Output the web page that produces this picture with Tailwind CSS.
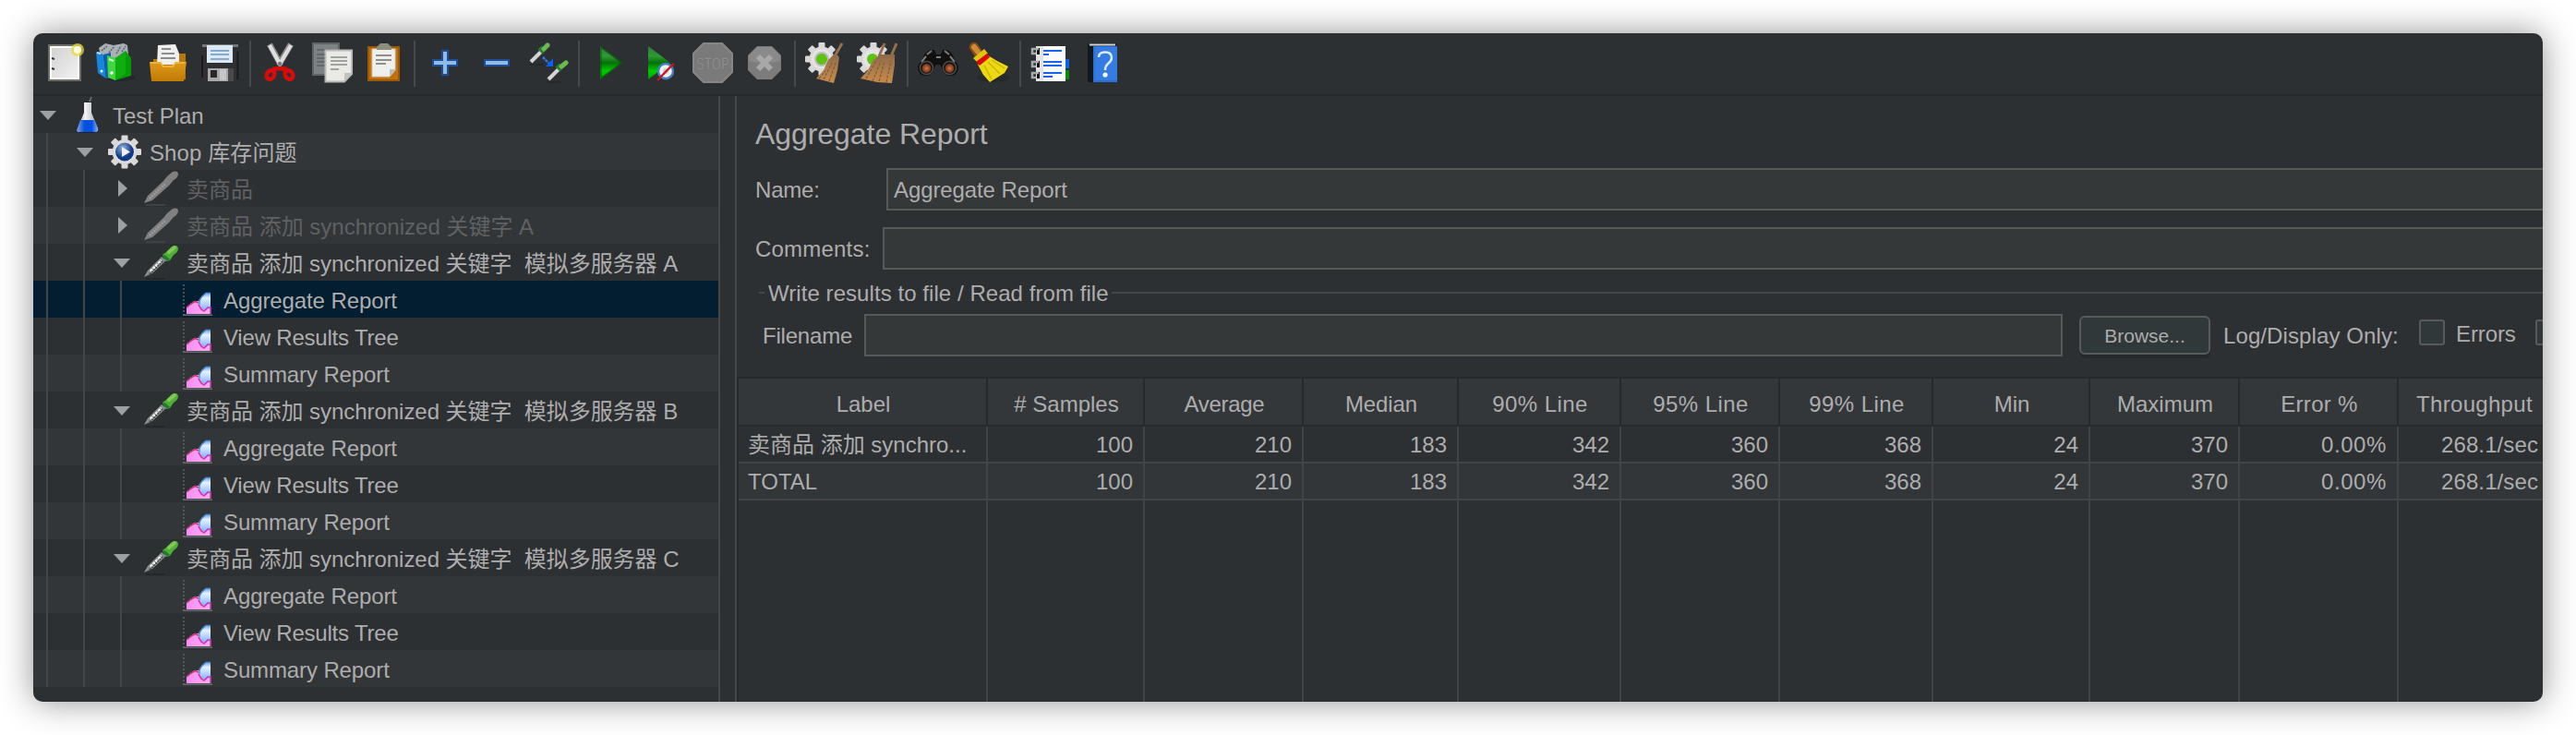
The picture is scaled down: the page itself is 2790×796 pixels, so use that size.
<!DOCTYPE html>
<html lang="zh">
<head>
<meta charset="utf-8">
<title>Aggregate Report</title>
<script src="https://cdn.jsdelivr.net/npm/@tailwindcss/browser@4"></script>
</head>
<body class="w-[2790px] h-[796px] overflow-hidden bg-white p-9 text-2xl text-[#adadad] font-['Liberation_Sans','Noto_Sans_CJK_SC',sans-serif]">

<svg class="absolute w-0 h-0">
  <defs>
    <linearGradient id="blueFlask" x1="0" x2="1"><stop offset="0" stop-color="#7fa4e8"/><stop offset=".35" stop-color="#0a4fd8"/><stop offset=".7" stop-color="#0050e8"/><stop offset="1" stop-color="#8ab0f0"/></linearGradient>
    <linearGradient id="glass" x1="0" x2="1"><stop offset="0" stop-color="#8f949c"/><stop offset=".4" stop-color="#f4f4f4"/><stop offset="1" stop-color="#a0a4aa"/></linearGradient>
    <linearGradient id="playG" x1="0" x2="0" y1="0" y2="1"><stop offset="0" stop-color="#2f7d36"/><stop offset=".3" stop-color="#2f9a36"/><stop offset=".5" stop-color="#067006"/><stop offset=".75" stop-color="#00cc00"/><stop offset="1" stop-color="#009a00"/></linearGradient>
    <linearGradient id="folder" x1="0" x2="0" y1="0" y2="1"><stop offset="0" stop-color="#e09a18"/><stop offset="1" stop-color="#c07a06"/></linearGradient>
    <linearGradient id="sky" x1="0" x2="0" y1="0" y2="1"><stop offset="0" stop-color="#6ba4ea"/><stop offset=".3" stop-color="#e6f2ff"/><stop offset="1" stop-color="#7db2f5"/></linearGradient>
    <linearGradient id="pink" x1="0" x2="1"><stop offset="0" stop-color="#f58cf5"/><stop offset="1" stop-color="#ffb4ea"/></linearGradient>
    <linearGradient id="page" x1="0" x2="1" y1="0" y2="1"><stop offset="0" stop-color="#cfcfcf"/><stop offset="1" stop-color="#f4f4f4"/></linearGradient>
    <linearGradient id="straw" x1="0" x2="0" y1="0" y2="1"><stop offset="0" stop-color="#8f6a48"/><stop offset=".6" stop-color="#b0804e"/><stop offset="1" stop-color="#c98a48"/></linearGradient>
    <radialGradient id="lens"><stop offset="0" stop-color="#d07a4a"/><stop offset="1" stop-color="#6d2a10"/></radialGradient>
    <radialGradient id="ball" cx=".4" cy=".3"><stop offset="0" stop-color="#9ab4e0"/><stop offset="1" stop-color="#123a86"/></radialGradient>
    <g id="gear">
      <g fill="#d9d9d9">
        <rect x="-3.500" y="-18" width="7" height="36" rx="1"/><rect x="-3.500" y="-18" width="7" height="36" rx="1" transform="rotate(45)"/>
        <rect x="-3.500" y="-18" width="7" height="36" rx="1" transform="rotate(90)"/><rect x="-3.500" y="-18" width="7" height="36" rx="1" transform="rotate(135)"/>
        <circle r="13.500"/>
      </g>
      <circle r="11" fill="#e4e4e4"/>
    </g>
    <symbol id="leaf" viewBox="0 0 55 40">
      <path d="M12 4V37" stroke="#5c5e60" stroke-width="1.6" stroke-dasharray="2 2"/><path d="M11 37.200H43" stroke="#6a6a6e" stroke-width="1.6"/>
      <path d="M15 36V29L24 22H30L41 28V36Z" fill="url(#pink)"/>
      <path d="M29 24L31 18L36 13H41V29L36 32L31 30Z" fill="url(#sky)"/>
      <path d="M29 26V21L32 17L36 13.500H41" fill="none" stroke="#4f8fe0" stroke-width="1.400"/>
      <path d="M15 29L20 25L24 22.500L28 24" fill="none" stroke="#c23a78" stroke-width="1.600"/>
      <path d="M28 26L31 31L34 33L38 29L41 29V36" fill="none" stroke="#d62fb8" stroke-width="1.600"/>
    </symbol>
    <symbol id="dropper" viewBox="0 0 55 40">
      <path d="M11 38H32" stroke="#24282a" stroke-width="2"/>
      <path d="M9 36L13 29L28 14L33 18L18 32Z" fill="#8b8e8e"/><path d="M16 30L28 18" stroke="#f2f2f2" stroke-width="3" stroke-dasharray="3 1"/><path d="M15 33L30 18" stroke="#3c4042" stroke-width="1.5" stroke-dasharray="2 1"/>
      <path d="M29 12L34 8L39 3Q45 0 46 5Q46 9 41 12L37 18L33 19Z" fill="#4fae35"/><path d="M36 9L42 4" stroke="#7bcb58" stroke-width="4" stroke-linecap="round"/><path d="M30 13L36 18" stroke="#1f7f2a" stroke-width="3"/>
    </symbol>
    <symbol id="dropperOff" viewBox="0 0 55 40">
      <path d="M11 38H32" stroke="#45494b" stroke-width="1.4"/>
      <path d="M9 36L13 28L30 12L34 7L40 2Q46 0 46 5Q45 9 41 11L36 17L18 33Z" fill="#808080"/><path d="M15 31L32 15" stroke="#9b9b9b" stroke-width="2.5" stroke-dasharray="2 1"/>
    </symbol>
    <symbol id="down" viewBox="0 0 30 40"><path d="M6 16H24L15 26Z" fill="#9da0a2"/></symbol>
    <symbol id="right" viewBox="0 0 30 40"><path d="M11 11V29L21 20Z" fill="#9da0a2"/></symbol>
  </defs>
</svg>

<main class="flex flex-col w-[2718px] h-[724px] rounded-[10px] overflow-hidden bg-[#2d3033] shadow-[0_0_36px_rgba(0,0,0,0.43)]">

  <!-- Toolbar -->
  <header class="flex items-start h-[68px] shrink-0 border-b-2 border-[#26292b] pl-3 [&_svg]:w-11 [&_svg]:h-11 [&_svg]:shrink-0 [&>div]:flex [&>div]:gap-3 [&>div]:mt-2.5 [&>i]:w-0.5 [&>i]:h-[50px] [&>i]:mt-2 [&>i]:mx-2.5 [&>i]:bg-[#47494a]">
    <div>
      <svg viewBox="0 0 44 44"><rect x="5" y="3" width="34" height="38" fill="url(#page)" stroke="#6d6e66" stroke-width="2"/><rect x="7" y="5" width="30" height="34" fill="none" stroke="#fff" stroke-width="2"/><path d="M8 17l3 1M8 28l3 1" stroke="#333" stroke-width="2"/><circle cx="36" cy="8" r="7" fill="#e5dc3a" opacity=".75"/><circle cx="36" cy="8" r="4" fill="#fffbe0"/></svg>
      <svg viewBox="0 0 44 44"><ellipse cx="26" cy="38" rx="17" ry="4" fill="#24282a"/><path d="M3 6L10 1L19 3L30 1L34 3L35 14L20 17L5 14Z" fill="#a9b1b5"/><path d="M6 9l6-5 M14 11l6-7 M22 12l5-8 M28 10l4-6" stroke="#5d686e" stroke-width="1.6" stroke-dasharray="2 1"/><path d="M0 10L8 13L11 39L2 33Z" fill="#1687dc"/><path d="M8 13L16 11V38L11 39Z" fill="#0a5fae"/><path d="M1 11L5 12" stroke="#bfe3ff" stroke-width="2"/><path d="M12 14L21 17V41L13 38Z" fill="#3fd63f"/><path d="M21 17L32 9L38 17V36L21 41Z" fill="#079a07"/><path d="M21 17L32 10V34L21 41Z" fill="#0fae0f"/><circle cx="6" cy="31" r="1.5" fill="#fff"/><circle cx="17" cy="33" r="1.8" fill="#fff"/><path d="M14 18L19 20" stroke="#d6ffd6" stroke-width="2"/></svg>
      <svg viewBox="0 0 44 44"><path d="M30 12H41V40H6V18H30Z" fill="#b9780a"/><path d="M11 3L30 2L34 12V24H10Z" fill="#efefef"/><path d="M15 7H25M15 12H29M14 17H30" stroke="#8c8c8c" stroke-width="2"/><path d="M2 21H14L17 25H27L30 21H42L39 42H4Z" fill="url(#folder)"/><path d="M3 22H14L17 26H27L30 22H40" fill="none" stroke="#f3bd4c" stroke-width="1.5"/></svg>
      <svg viewBox="0 0 44 44"><rect x="3" y="2" width="39" height="40" rx="2" fill="#303033"/><rect x="3" y="2" width="39" height="3" fill="#77777a"/><path d="M3 14V38M41.500 10V40" stroke="#1a1a1c" stroke-width="2"/><rect x="8" y="3" width="28" height="19" fill="#dbe9f5"/><path d="M12 9H32M12 13H32M12 18H32" stroke="#86abcf" stroke-width="2"/><rect x="9" y="28" width="22" height="14" fill="#a8a8a8"/><rect x="12" y="30" width="7" height="8" fill="#28282a"/><rect x="22" y="29" width="7" height="12" fill="#c6c6c6"/><rect x="31" y="28" width="6" height="14" fill="#4a4a4c"/></svg>
    </div>
    <i></i>
    <div>
      <svg viewBox="0 0 44 44"><path d="M10 2L22 24M33 2L20 24" stroke="#8c8c8c" stroke-width="6.500"/><path d="M10 3L22 25M33 3L20 25" stroke="#dedede" stroke-width="4.200"/><circle cx="21" cy="23" r="2.200" fill="#777"/><g fill="none" stroke="#dd0a0a" stroke-width="4.400"><ellipse cx="11" cy="35" rx="4" ry="5" transform="rotate(35 11 35)"/><ellipse cx="31" cy="35" rx="4" ry="5" transform="rotate(-35 31 35)"/><path d="M13 29L21 28L29 29"/></g></svg>
      <svg viewBox="0 0 44 44"><rect x="1" y="1" width="28" height="34" fill="#7d8284" stroke="#5e6466" stroke-width="2"/><path d="M5 8H20M5 13H14M5 17H14M5 21H14M5 25H14" stroke="#63686a" stroke-width="2"/><path d="M14.500 8.500H43V34L35 42.500H14.500Z" fill="#e9e9e6" stroke="#b9b9b5" stroke-width="2"/><path d="M43 33H35V42Z" fill="#c2c2be"/><path d="M20 16H38M20 20H38M20 24H38M20 29H29" stroke="#a2a2a0" stroke-width="2"/></svg>
      <svg viewBox="0 0 44 44"><rect x="5" y="5" width="33" height="36" fill="#c1700a" stroke="#9b5805" stroke-width="2"/><path d="M9 7H34V30L28 37H9Z" fill="#efefec" stroke="#ccc" stroke-width="1"/><path d="M35 29H28V37Z" fill="#bdbdb8"/><path d="M13 14H30M13 19H30M13 23H24" stroke="#8f8f8c" stroke-width="2"/><path d="M14 8V5L18 1H26L30 5V8Z" fill="#8d8e7c"/></svg>
    </div>
    <i></i>
    <div>
      <svg viewBox="0 0 44 44"><path d="M19 9H25V19H35V25H25V35H19V25H9V19H19Z" fill="#8fbbe6" stroke="#1d4f97" stroke-width="2"/></svg>
      <svg viewBox="0 0 44 44"><path d="M9 19H35V25H9Z" fill="#8fbbe6" stroke="#1d4f97" stroke-width="2"/></svg>
      <svg viewBox="0 0 44 44"><path d="M2 24H17M21 43H36" stroke="#232628" stroke-width="1.500"/><path d="M3 21L14 10" stroke="#d4d4d4" stroke-width="4"/><path d="M13 10L17 6" stroke="#257a30" stroke-width="7"/><path d="M17 7L21 3" stroke="#6cba4e" stroke-width="5" stroke-linecap="round"/><path d="M22 40L33 29" stroke="#d4d4d4" stroke-width="4"/><path d="M32 29L36 25" stroke="#257a30" stroke-width="7"/><path d="M36 26L41 22" stroke="#6cba4e" stroke-width="5" stroke-linecap="round"/><path d="M16 16L23 23" stroke="#2f78ee" stroke-width="2.500" stroke-dasharray="3 1"/><path d="M27 17V26H19Z" fill="#0d5ff0"/></svg>
    </div>
    <i></i>
    <div>
      <svg viewBox="0 0 44 44"><path d="M12 4L36 22L12 40Z" fill="url(#playG)"/><path d="M13 5.500L35 22L13 38.500Z" fill="none" stroke="#064f06" stroke-width="1.300" opacity=".7"/></svg>
      <svg viewBox="0 0 44 44"><path d="M8 4L32 22L8 40Z" fill="url(#playG)"/><circle cx="27" cy="31" r="8" fill="#f2f2f2" stroke="#3f7fc4" stroke-width="2.400"/><circle cx="27" cy="31" r="3" fill="#c9c9c9"/><path d="M35.500 23L18 41" stroke="#d01020" stroke-width="2.400"/></svg>
      <svg viewBox="0 0 44 44"><path d="M12 0H32L44 12V32L32 44H12L0 32V12Z" fill="#7a7a7a"/><path d="M12 1H32L43 12V32L32 43H12L1 32V12Z" fill="none" stroke="#868686" stroke-width="2"/><text transform="translate(22 29.500) scale(.63 1)" text-anchor="middle" font-size="21" font-weight="bold" fill="#8c8c8c" stroke="#6c6c6c" stroke-width=".6">STOP</text></svg>
      <svg viewBox="0 0 44 44"><path d="M14 4H30L40 14V30L30 40H14L4 30V14Z" fill="#7c7c7c"/><path d="M14 5H30L39 14V20Q22 24 5 20V14Z" fill="#8a8a8a"/><path d="M15 15L29 29M29 15L15 29" stroke="#a8a8a8" stroke-width="6"/></svg>
    </div>
    <i></i>
    <div>
      <svg viewBox="0 0 44 44"><use href="#gear" x="18" y="18"/><circle cx="18" cy="18" r="8" fill="#bdbdbd"/><circle cx="18" cy="18" r="6" fill="#5ec212"/><path d="M40 1L32 15" stroke="#94714c" stroke-width="3"/><path d="M25 19L31 13L37 16L35 30L31 44L12 39L20 30Z" fill="url(#straw)"/><path d="M20 40L29 22M26 42L33 22M15 39L22 31" stroke="#835a34" stroke-width="1.200" stroke-dasharray="3 1.500"/></svg>
      <svg viewBox="0 0 44 44"><use href="#gear" x="18" y="18"/><circle cx="17" cy="18" r="6" fill="#5ec212"/><path d="M30 1L24 15M43 1L37 15" stroke="#94714c" stroke-width="3"/><path d="M17 20L25 13H41V24L38 44L22 43L4 39L12 30Z" fill="url(#straw)"/><path d="M10 39L21 20M17 42L26 20M24 42L30 20M32 43L37 20" stroke="#835a34" stroke-width="1.200" stroke-dasharray="3 1.500"/></svg>
    </div>
    <i></i>
    <div>
      <svg viewBox="0 0 44 44"><path d="M0 26L8 12L13 8H18L20 13H25L27 8H32L37 12L44 26Q44 36 35 36Q28 36 26 27L24 24H20L18 27Q16 36 9 36Q0 36 0 26Z" fill="#111"/><path d="M10 13L15 9M29 9L34 13M4 21L9 15M35 15L40 21M20 16H25" stroke="#7d7d7d" stroke-width="2"/><circle cx="9.500" cy="27.500" r="7" fill="none" stroke="#4c4c4c" stroke-width="1.500"/><circle cx="34.500" cy="27.500" r="7" fill="none" stroke="#4c4c4c" stroke-width="1.500"/><circle cx="9.500" cy="28" r="5" fill="url(#lens)"/><circle cx="34.500" cy="28" r="5" fill="url(#lens)"/></svg>
      <svg viewBox="0 0 44 44"><ellipse cx="26" cy="38" rx="18" ry="5" fill="#26292a"/><path d="M5 5L9 11" stroke="#8a4d0c" stroke-width="10" stroke-linecap="round"/><path d="M5 5L9 10" stroke="#cf8a3c" stroke-width="6" stroke-linecap="round"/><path d="M4 17L16 7L20 12L8 21Z" fill="#ddc60e"/><path d="M9 24L20 14L30 20L42 26L38 33L22 43L15 35Z" fill="#ecd912"/><path d="M16 25L24 40M20 21L33 34M24 19L38 28" stroke="#c9b40c" stroke-width="1.400"/><path d="M7 21L19 12L22 16L11 25Z" fill="#dd0808"/></svg>
    </div>
    <i></i>
    <div>
      <svg viewBox="0 0 44 44"><rect x="37" y="18" width="5" height="10" fill="#0b62ea"/><rect x="37" y="30" width="5" height="10" fill="#0a8a0a"/><rect x="6" y="4" width="32" height="38" fill="#fafafa"/><rect x="6" y="4" width="8" height="38" fill="#e2e2e2"/><path d="M14 9H34M14 21H34M14 33H34" stroke="#1763ee" stroke-width="2"/><path d="M14 13H20M14 25H34M14 37H24" stroke="#1763ee" stroke-width="2"/><g fill="#111"><rect x="7" y="6" width="3" height="7"/><rect x="7" y="20" width="3" height="7"/><rect x="7" y="32" width="3" height="7"/></g><g fill="none" stroke="#a9a9a9" stroke-width="2.500"><path d="M9 7H2V12H6M9 21H2V26H6M9 33H2V38H6"/></g></svg>
      <svg viewBox="0 0 44 44"><path d="M8 1H37L38 43H6V4Z" fill="#15171a"/><path d="M12 4H38V43H12Z" fill="#2a6fd6"/><path d="M14 5H38V41H14Z" fill="#347be2"/><path d="M8 2.500H36" stroke="#d5d5d5" stroke-width="2"/><path d="M18 16Q18 10.500 25 10.500Q32 10.500 32 16.500Q32 20 28 23Q25 25.500 25 30" fill="none" stroke="#dcebff" stroke-width="2.400"/><circle cx="25" cy="35" r="2.600" fill="#fff"/></svg>
    </div>
  </header>

  <div class="flex flex-1 min-h-0">
    <!-- Test plan tree -->
    <nav class="w-[744px] shrink-0 border-r-2 border-[#464646] leading-[43px] [&_span]:whitespace-pre [&>div]:flex [&>div]:h-10 [&>div:nth-child(even)]:bg-[#323639] [&_i]:h-10 [&_i]:shrink-0 [&_i]:border-l-2 [&_i]:border-[#434547] [&_svg]:h-10 [&_svg]:shrink-0">
      <div class="pl-px"><svg class="w-[30px]"><use href="#down"/></svg><svg class="w-[55px]" viewBox="0 0 55 40"><ellipse cx="28" cy="38" rx="12" ry="2" fill="#202326"/><path d="M30 6L32 1" stroke="#6a6a6a" stroke-width="2"/><path d="M24 7H32V18L39 35Q40 39 36 39H19Q15 39 17 35L24 18Z" fill="url(#glass)"/><path d="M20 26H35L39 35Q40 39 36 39H19Q15 39 17 35Z" fill="url(#blueFlask)"/></svg><span>Test Plan</span></div>
      <div class="pl-3.5"><i class="w-[27px]"></i><svg class="w-[30px]"><use href="#down"/></svg><svg class="w-[55px]" viewBox="0 0 55 40"><use href="#gear" x="28" y="20.500"/><circle cx="28" cy="20.500" r="10" fill="url(#ball)"/><path d="M25 15L34 20.500L25 26Z" fill="#eef3fb"/></svg><span class="tracking-[0.1px]">Shop 库存问题</span></div>
      <div class="pl-3.5 text-[#5f6163]"><i class="w-10"></i><i class="w-[27px]"></i><svg class="w-[30px]"><use href="#right"/></svg><svg class="w-[55px]"><use href="#dropperOff"/></svg><span>卖商品</span></div>
      <div class="pl-3.5 text-[#5f6163]"><i class="w-10"></i><i class="w-[27px]"></i><svg class="w-[30px]"><use href="#right"/></svg><svg class="w-[55px]"><use href="#dropperOff"/></svg><span>卖商品 添加 synchronized 关键字 A</span></div>
      <div class="pl-3.5"><i class="w-10"></i><i class="w-[27px]"></i><svg class="w-[30px]"><use href="#down"/></svg><svg class="w-[55px]"><use href="#dropper"/></svg><span class="-tracking-[0.04px]">卖商品 添加 synchronized 关键字  模拟多服务器 A</span></div>
      <div class="pl-3.5 bg-[#041e31]!"><i class="w-10"></i><i class="w-10"></i><i class="w-[57px]"></i><svg class="w-[55px]"><use href="#leaf"/></svg><span class="-tracking-[0.1px]">Aggregate Report</span></div>
      <div class="pl-3.5"><i class="w-10"></i><i class="w-10"></i><i class="w-[57px]"></i><svg class="w-[55px]"><use href="#leaf"/></svg><span class="-tracking-[0.2px]">View Results Tree</span></div>
      <div class="pl-3.5"><i class="w-10"></i><i class="w-10"></i><i class="w-[57px]"></i><svg class="w-[55px]"><use href="#leaf"/></svg><span class="-tracking-[0.12px]">Summary Report</span></div>
      <div class="pl-3.5"><i class="w-10"></i><i class="w-[27px]"></i><svg class="w-[30px]"><use href="#down"/></svg><svg class="w-[55px]"><use href="#dropper"/></svg><span class="-tracking-[0.04px]">卖商品 添加 synchronized 关键字  模拟多服务器 B</span></div>
      <div class="pl-3.5"><i class="w-10"></i><i class="w-10"></i><i class="w-[57px]"></i><svg class="w-[55px]"><use href="#leaf"/></svg><span class="-tracking-[0.1px]">Aggregate Report</span></div>
      <div class="pl-3.5"><i class="w-10"></i><i class="w-10"></i><i class="w-[57px]"></i><svg class="w-[55px]"><use href="#leaf"/></svg><span class="-tracking-[0.2px]">View Results Tree</span></div>
      <div class="pl-3.5"><i class="w-10"></i><i class="w-10"></i><i class="w-[57px]"></i><svg class="w-[55px]"><use href="#leaf"/></svg><span class="-tracking-[0.12px]">Summary Report</span></div>
      <div class="pl-3.5"><i class="w-10"></i><i class="w-[27px]"></i><svg class="w-[30px]"><use href="#down"/></svg><svg class="w-[55px]"><use href="#dropper"/></svg><span class="-tracking-[0.04px]">卖商品 添加 synchronized 关键字  模拟多服务器 C</span></div>
      <div class="pl-3.5"><i class="w-10"></i><i class="w-10"></i><i class="w-[57px]"></i><svg class="w-[55px]"><use href="#leaf"/></svg><span class="-tracking-[0.1px]">Aggregate Report</span></div>
      <div class="pl-3.5"><i class="w-10"></i><i class="w-10"></i><i class="w-[57px]"></i><svg class="w-[55px]"><use href="#leaf"/></svg><span class="-tracking-[0.2px]">View Results Tree</span></div>
      <div class="pl-3.5"><i class="w-10"></i><i class="w-10"></i><i class="w-[57px]"></i><svg class="w-[55px]"><use href="#leaf"/></svg><span class="-tracking-[0.12px]">Summary Report</span></div>
    </nav>

    <!-- Report panel -->
    <section class="flex flex-col flex-1 min-w-0 ml-4 border-l-2 border-[#464646] overflow-hidden whitespace-nowrap">
      <h1 class="h-[78px] pl-5 text-[32px] leading-[82px] -tracking-[0.06px] shrink-0">Aggregate Report</h1>
      <div class="flex h-[46px] pl-5 shrink-0">
        <label class="w-[142px] leading-[48px] -tracking-[0.2px]">Name:</label>
        <div class="flex-1 border-2 border-r-0 border-[#575959] bg-[#353839] pl-[6px] leading-[44px] -tracking-[0.1px]">Aggregate Report</div>
      </div>
      <div class="flex h-[46px] mt-[18px] pl-5 shrink-0">
        <label class="w-[138px] leading-[48px] tracking-[0.2px]">Comments:</label>
        <div class="flex-1 border-2 border-r-0 border-[#575959] bg-[#353839]"></div>
      </div>
      <div class="flex items-center h-[28px] mt-[11px] pl-6 shrink-0">
        <i class="w-1.5 h-0.5 bg-[#464748]"></i>
        <span class="w-[370px] ml-1 mr-0.5 h-7 leading-[30px] tracking-[0.06px]">Write results to file / Read from file</span>
        <i class="flex-1 h-0.5 bg-[#464748]"></i>
      </div>
      <div class="flex h-[46px] mt-[9px] pl-7 shrink-0">
        <label class="w-[110px] shrink-0 leading-[48px] -tracking-[0.2px]">Filename</label>
        <div class="w-[1298px] shrink-0 border-2 border-[#575959] bg-[#353839]"></div>
        <button class="w-[142px] h-[42px] shrink-0 mt-0.5 ml-[18px] border-2 border-[#575b59] rounded-md bg-[#30383a] text-[21px] leading-[40px] shadow-[0_4px_0_#26292b]">Browse...</button>
        <span class="w-[226px] shrink-0 pl-3.5 leading-[48px] tracking-[0.1px]">Log/Display Only:</span>
        <i class="w-7 h-7 shrink-0 mt-1.5 border-2 border-[#585a5a] rounded-[3px] bg-[#30383a]"></i>
        <span class="w-[98px] shrink-0 pl-3 leading-[44px] -tracking-[0.1px]">Errors</span>
        <i class="w-7 h-7 shrink-0 mt-1.5 border-2 border-[#585a5a] rounded-[3px] bg-[#30383a]"></i>
      </div>

      <!-- Results table -->
      <div class="flex-1 flex flex-col mt-[22px] border-t-2 border-l-2 border-[#26292b] w-[1966px]">
        <div class="grid grid-cols-[270px_170px_172px_168px_176px_172px_166px_170px_162px_172px_164px] h-[52px] shrink-0 border-b-2 border-[#26292b] bg-[#34373a] text-center leading-[56px] [&>div]:border-r-2 [&>div]:border-[#26292b] [&>div]:pl-0.5">
          <div>Label</div><div>#&nbsp;Samples</div><div class="-tracking-[0.3px]">Average</div><div class="-tracking-[0.1px]">Median</div><div class="tracking-[0.4px]">90% Line</div><div class="tracking-[0.4px]">95% Line</div><div class="tracking-[0.4px]">99% Line</div><div>Min</div><div>Maximum</div><div class="tracking-[0.3px]">Error %</div><div class="tracking-[0.3px]">Throughput</div>
        </div>
        <div class="grid flex-1 grid-cols-[270px_170px_172px_168px_176px_172px_166px_170px_162px_172px_164px] grid-rows-[40px_40px_1fr] text-right leading-[40px] [&>div]:border-r-2 [&>div]:border-b-2 [&>div]:border-[#414345] [&>div]:pr-[11px] [&>div:nth-child(n+12):nth-child(-n+22)]:bg-[#323639] [&>div:nth-child(n+23)]:border-b-0">
          <div class="pl-2.5 text-left">卖商品 添加 synchro...</div><div>100</div><div>210</div><div>183</div><div>342</div><div>360</div><div>368</div><div>24</div><div>370</div><div class="tracking-[0.6px]">0.00%</div><div class="tracking-[0.1px]">268.1/sec</div>
          <div class="pl-2.5 text-left">TOTAL</div><div>100</div><div>210</div><div>183</div><div>342</div><div>360</div><div>368</div><div>24</div><div>370</div><div class="tracking-[0.6px]">0.00%</div><div class="tracking-[0.1px]">268.1/sec</div>
          <div></div><div></div><div></div><div></div><div></div><div></div><div></div><div></div><div></div><div></div><div></div>
        </div>
      </div>
    </section>
  </div>
</main>
</body>
</html>
